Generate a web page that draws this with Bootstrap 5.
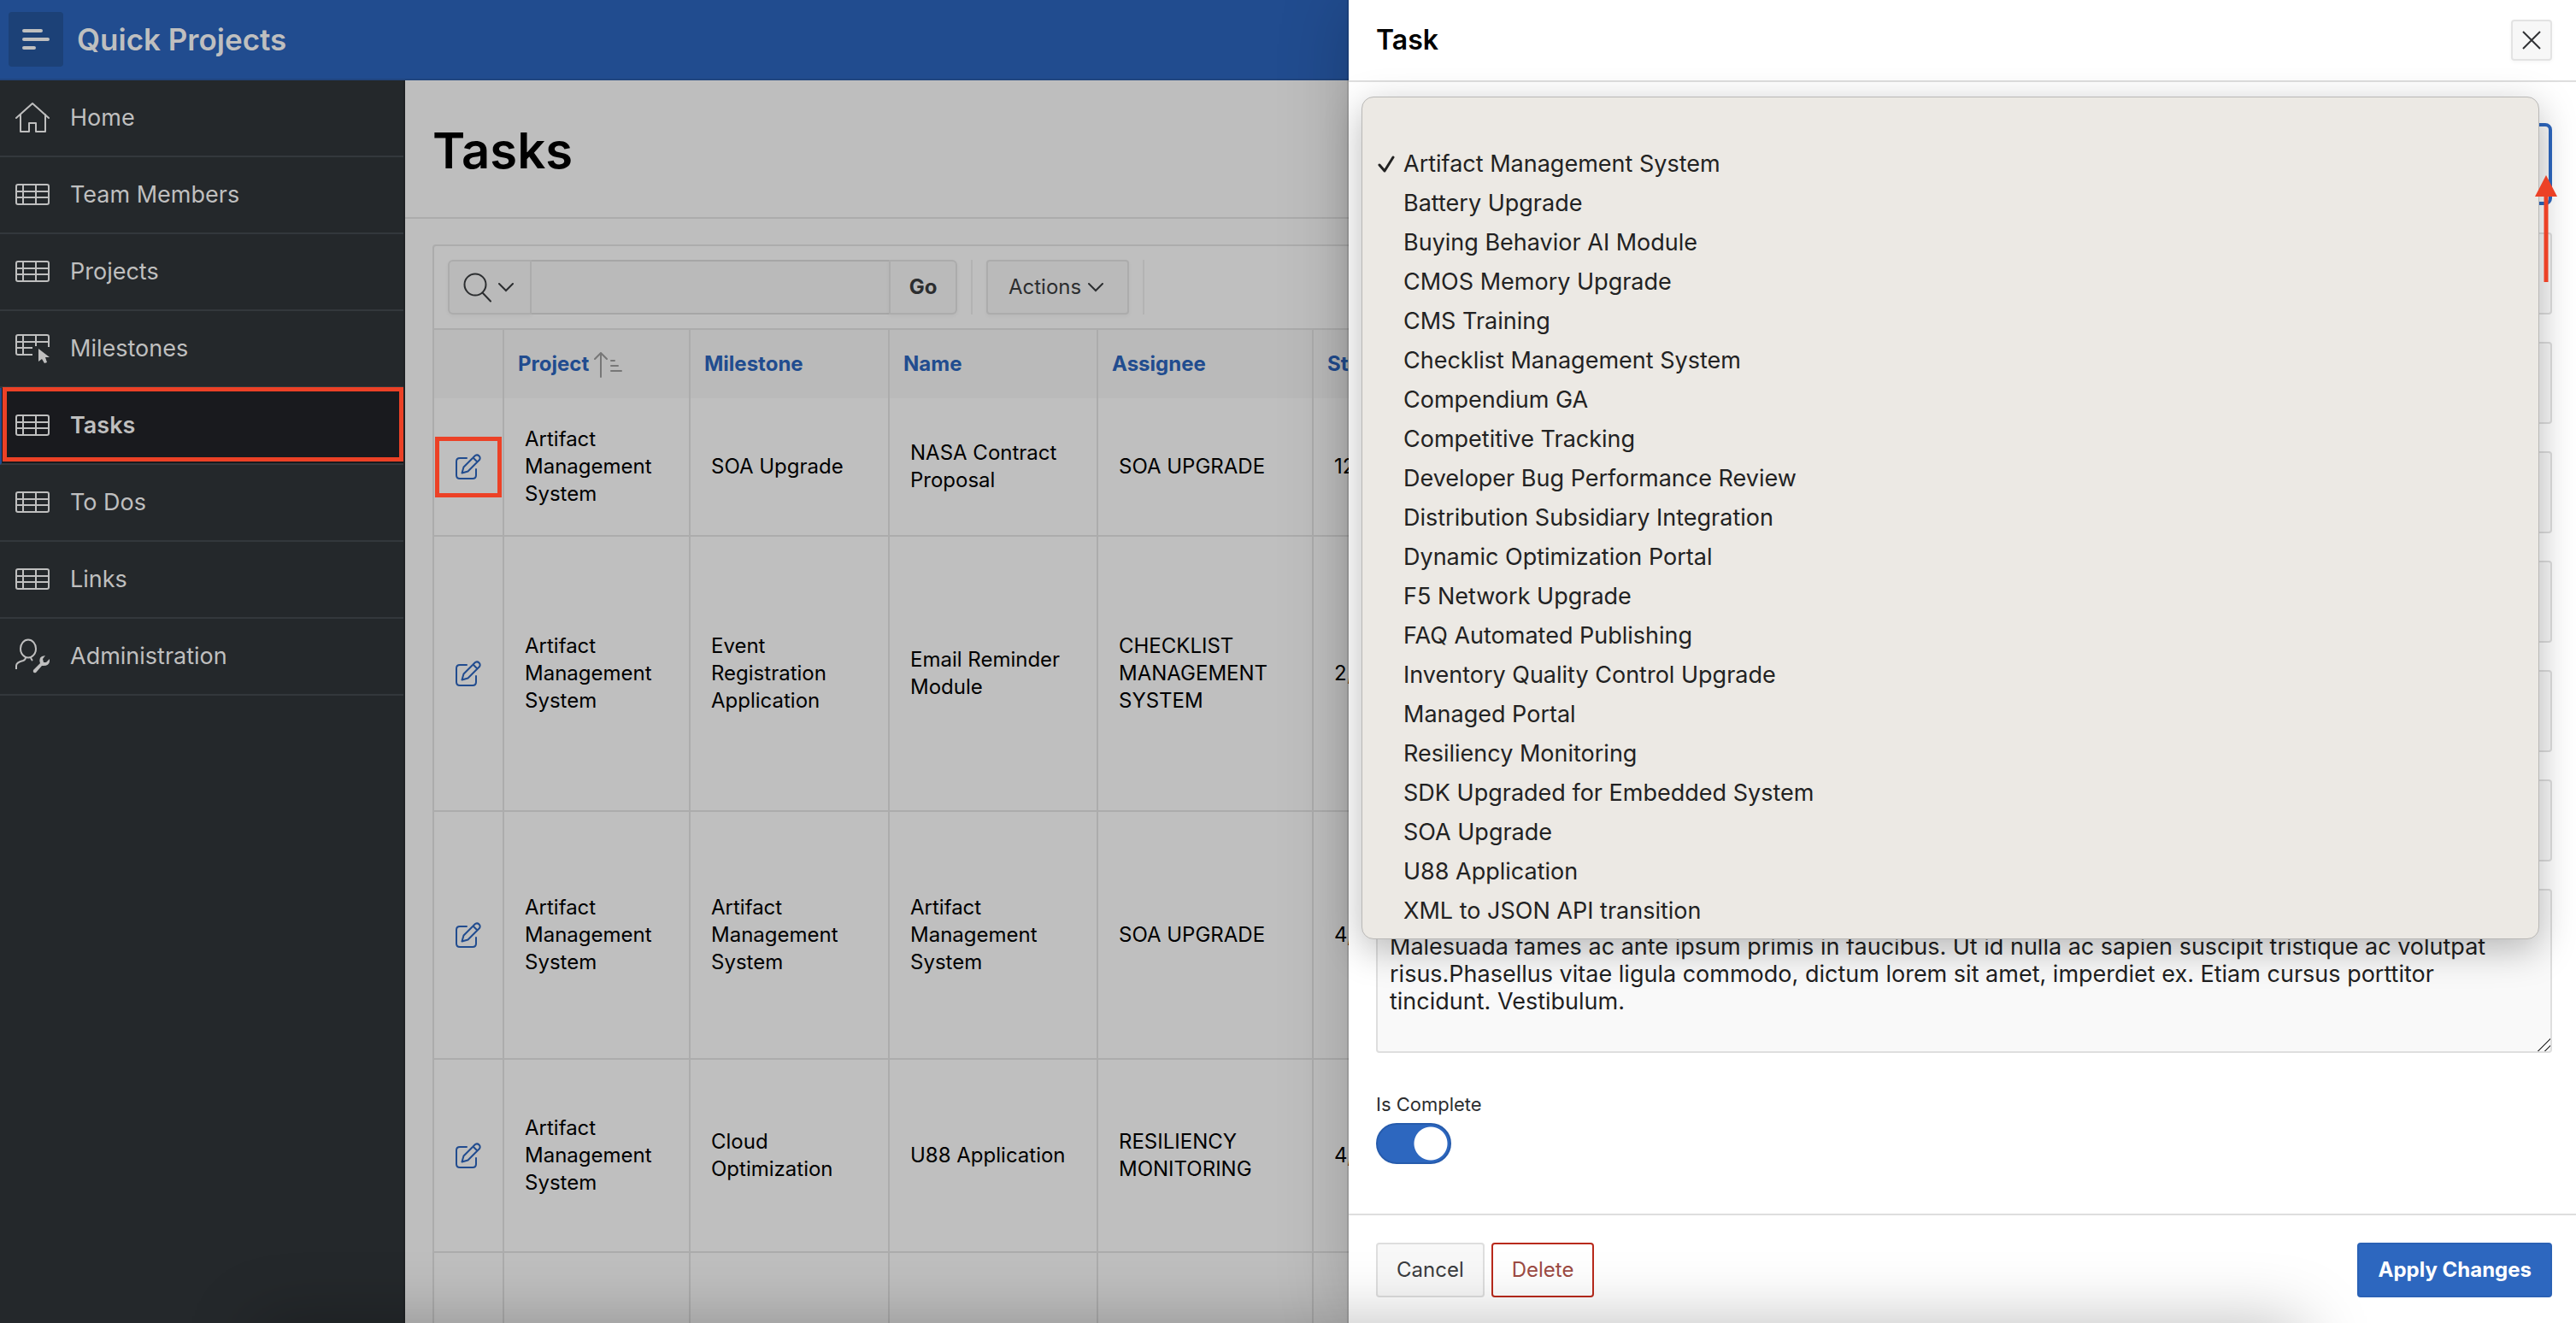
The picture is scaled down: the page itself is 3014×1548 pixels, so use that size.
<!DOCTYPE html>
<html lang="en">
<head>
<meta charset="utf-8">
<meta name="viewport" content="width=device-width, initial-scale=1">
<title>Quick Projects - Tasks</title>
<link href="https://cdn.jsdelivr.net/npm/bootstrap@5.3.0/dist/css/bootstrap.min.css" rel="stylesheet">
<style>
:root { --app-blue: #214c8f; --app-red: #ec4126; --app-line: #acacac; --app-accent: #2d67bf; }
body { font-family: Inter, "Liberation Sans", sans-serif; font-size: 24px; line-height: 32px; color: #000; background: #bebebe; }
button, input, select, textarea { font-family: inherit; }
.app-shell { height: 100vh; overflow: hidden; }
.app-shell::after { content: ""; position: absolute; z-index: 20; top: 100%; left: 300px; right: 320px; height: 100px; box-shadow: 0 0 80px rgba(0,0,0,.26); pointer-events: none; }
.app-header { height: 94px; padding: 0 10px; gap: 16px; background: var(--app-blue); border-bottom: 2px solid #20457f; }
.menu-toggle { width: 64px; height: 64px; background: #1c4177; border-radius: 4px; }
.app-name { font-size: 35px; line-height: 40px; font-weight: 600; color: #bfbfbf; }
.side-nav { width: 474px; background: #24282b; border-right: 2px solid #1f2225; }
.side-link { height: 90px; padding-left: 18px; gap: 24px; border-bottom: 2px solid #33383c; font-size: 27px; color: #bfbfbf; }
.side-link.active { background: #191a1e; border-left: 2px solid var(--app-blue); padding-left: 16px; font-weight: 600; position: relative; }
.side-link.active::after { content: ""; position: absolute; inset: -1px 0 2px 1px; border: 5px solid var(--app-red); }
.page-title { height: 162px; padding: 4px 32px 0; border-bottom: 2px solid #acacac; }
.page-title h1 { font-size: 58px; line-height: 72px; font-weight: 600; }
.report { margin: 30px 0 0 32px; border: 2px solid var(--app-line); border-radius: 4px 0 0 0; background: #bfbfbf; width: 1700px; }
.report-bar { height: 98px; padding: 16px; gap: 16px; border-bottom: 2px solid var(--app-line); }
.bar-btn { background: #bababa; border: 2px solid var(--app-line); color: #2c2e30; font-size: 24px; height: 64px; box-shadow: 0 2px 4px rgba(0,0,0,.04); }
.search-btn { width: 98px; }
.go-btn { width: 80px; }
.bar-input { width: 418px; height: 64px; background: #bababa; border: 2px solid #a6a6a6; border-left: 0; border-right: 0; }
.bar-rule { width: 2px; background: #b3b3b3; }
.grid { table-layout: fixed; width: 1696px; border-collapse: separate; border-spacing: 0; }
.grid th { height: 80px; padding: 0 16px; background: #bababa; border-right: 2px solid var(--app-line); font-weight: 700; vertical-align: middle; }
.grid th a { color: var(--app-blue); text-decoration: none; }
.grid td { padding: 0 24px; border-right: 2px solid var(--app-line); border-bottom: 2px solid var(--app-line); vertical-align: middle; }
.grid td:first-child { padding: 0; text-align: center; }
.col-edit { width: 82px; } .col-project { width: 218px; } .col-mile { width: 233px; } .col-name { width: 244px; } .col-who { width: 252px; }
.row-a td { height: 162px; } .row-b td { height: 322px; } .row-c td { height: 290px; } .row-d td { height: 226px; }
.edit-link { display: inline-flex; align-items: center; justify-content: center; vertical-align: middle; width: 78px; height: 71px; color: var(--app-blue); }
.edit-link.marked { border: 5px solid var(--app-red); }
.drawer { left: 1578px; background: #fff; box-shadow: 0 0 80px rgba(0,0,0,.2), -2px 0 0 rgba(0,0,0,.1); z-index: 10; }
.drawer-head { height: 96px; padding: 0 28px 0 32px; border-bottom: 2px solid #dedede; }
.drawer-head h2 { font-size: 32px; line-height: 40px; font-weight: 600; }
.close-btn { width: 48px; height: 48px; background: #f7f7f7; border: 2px solid #e3e3e3; border-radius: 4px; box-shadow: 0 2px 4px rgba(0,0,0,.04); }
.drawer-body { padding: 48px 28px 0 32px; gap: 32px; }
.field { appearance: none; height: 96px; flex: none; background-color: #f9f9f9; border: 2px solid #dedede; border-radius: 4px; font-size: 27px; }
.field.on { border: 4px solid var(--app-accent); border-radius: 8px; }
.field-notes { height: 192px; flex: none; background: #f9f9f9; border: 2px solid #dedede; border-radius: 4px; padding: 50px 14px 0; font-size: 27px; line-height: 32px; color: #1f1f1f; resize: vertical; overflow: hidden; }
.field-notes::-webkit-resizer { background: linear-gradient(135deg, transparent 49%, #555 49%, #555 56%, transparent 56%, transparent 76%, #555 76%, #555 83%, transparent 83%); }
.switch-group { margin-top: 14px; }
.switch-group label { font-size: 22px; line-height: 28px; color: #2c2e30; }
.switch-group .form-switch { padding: 0; min-height: 0; margin: 0; }
.switch-group .form-check-input { width: 88px; height: 48px; margin: 8px 0 0; background-color: var(--app-accent); border: 2px solid #265bac; background-size: 44px 44px; background-image: radial-gradient(circle at center, #fff 19px, rgba(255,255,255,0) 20px); background-position: right center; }
.drawer-foot { height: 128px; padding: 2px 28px 0 32px; border-top: 2px solid #dedede; gap: 8px; }
.foot-btn { height: 64px; border: 2px solid #dedede; border-radius: 4px; background: #f8f8f8; padding: 0 22px; font-size: 24px; color: #3a3c3e; }
.foot-btn.danger { background: transparent; border-color: #b92a1c; color: #9d4b43; }
.foot-btn.primary { background: var(--app-accent); border-color: #2a61b5; color: #fff; font-weight: 700; }
.choices { left: 15px; right: 43px; top: 113px; padding: 9px 0; background: #ece9e4; border: 1px solid #b9b8b6; border-radius: 14px; box-shadow: 0 12px 44px rgba(0,0,0,.27); font-size: 27px; color: #222; z-index: 3; }
.choices li { height: 46px; padding-left: 18px; }
.choices svg { width: 20px; margin-right: 10px; }
.arrow { right: 22px; top: 205px; z-index: 5; }
</style>
</head>
<body>
<svg class="d-none" xmlns="http://www.w3.org/2000/svg">
  <symbol id="i-table" viewBox="0 0 40 26"><g fill="none" stroke="currentColor" stroke-width="2"><rect x="1" y="1" width="38" height="23" rx="2"/><path d="M1 9h38M1 16h38M9 1v23M24 1v23"/></g></symbol>
  <symbol id="i-edit" viewBox="0 0 30 30"><g fill="none" stroke="currentColor" stroke-width="2" stroke-linejoin="round" stroke-linecap="round"><path d="M13 5H5q-4 0-4 4v16q0 4 4 4h15q4 0 4-4v-7"/><path d="M7.500 22.500l2-7L23 2q2.500-1.500 4.500.5T28 7L14.500 20.500zM20.500 4.500l5 5"/></g></symbol>
  <symbol id="i-down" viewBox="0 0 18 11"><path d="M1 1l8 8 8-8" fill="none" stroke="currentColor" stroke-width="2" stroke-linecap="round"/></symbol>
</svg>
<div class="app-shell d-flex flex-column position-relative">
  <header class="app-header d-flex align-items-center flex-shrink-0">
    <button class="menu-toggle btn border-0 p-0 d-flex align-items-center justify-content-center" type="button" aria-label="Menu"><svg width="32" height="26" viewBox="0 0 32 26"><path d="M2 3h20M2 13h28M2 23h12" stroke="#bfbfbf" stroke-width="4" stroke-linecap="round"/></svg></button>
    <span class="app-name">Quick Projects</span>
  </header>
  <div class="d-flex flex-grow-1 overflow-hidden">
    <nav class="side-nav flex-shrink-0">
      <a class="side-link d-flex align-items-center text-decoration-none" href="#"><svg width="40" height="40" viewBox="0 0 40 40" fill="none" stroke="currentColor" stroke-width="2"><path d="M1 20L20 3l19 17M6 16v20h10V26h8v10h11V16" stroke-linejoin="round" stroke-linecap="round"/></svg>Home</a>
      <a class="side-link d-flex align-items-center text-decoration-none" href="#"><svg width="40" height="26"><use href="#i-table"/></svg>Team Members</a>
      <a class="side-link d-flex align-items-center text-decoration-none" href="#"><svg width="40" height="26"><use href="#i-table"/></svg>Projects</a>
      <a class="side-link d-flex align-items-center text-decoration-none" href="#"><svg width="40" height="34" viewBox="0 0 40 34"><path d="M20 24H3q-2 0-2-2V3q0-2 2-2h34q2 0 2 2v12M1 9h38M1 16h19M9 1v23M24 1v13" fill="none" stroke="currentColor" stroke-width="2"/><path d="M27 17v15l4-3 3 5 3-1-2-6h5z" fill="currentColor"/></svg>Milestones</a>
      <a class="side-link active d-flex align-items-center text-decoration-none" href="#"><svg width="40" height="26"><use href="#i-table"/></svg>Tasks</a>
      <a class="side-link d-flex align-items-center text-decoration-none" href="#"><svg width="40" height="26"><use href="#i-table"/></svg>To Dos</a>
      <a class="side-link d-flex align-items-center text-decoration-none" href="#"><svg width="40" height="26"><use href="#i-table"/></svg>Links</a>
      <a class="side-link d-flex align-items-center text-decoration-none" href="#"><svg width="40" height="42" viewBox="0 0 40 42"><g fill="none" stroke="currentColor" stroke-width="2"><ellipse cx="15" cy="12" rx="9" ry="10.500"/><path d="M12 22q0 3-3 4-8 2-8 6v4M18 22q0 2 2 4"/></g><path d="M21 37l8-8q-2-6 2-8l4-1-3 4 1 4 3 0 4-4q1 9-9 8l-7 8q-4 1-3-3z" fill="currentColor"/></svg>Administration</a>
    </nav>
    <main class="flex-grow-1 overflow-hidden">
      <div class="page-title d-flex align-items-center"><h1 class="m-0">Tasks</h1></div>
      <section class="report">
        <div class="report-bar d-flex">
          <div class="d-flex">
            <button class="bar-btn search-btn btn rounded-0 rounded-start d-flex align-items-center p-0 ps-3" type="button" aria-label="Search columns"><svg width="33" height="35" viewBox="0 0 33 35" fill="none" stroke="currentColor" stroke-width="2"><circle cx="14" cy="14" r="12.500"/><path d="M22.500 23.500l9.500 10" stroke-linecap="round"/></svg><svg class="ms-2" width="18" height="11"><use href="#i-down"/></svg></button>
            <input class="bar-input" type="text" aria-label="Search">
            <button class="bar-btn go-btn btn rounded-0 rounded-end fw-bold p-0" type="button">Go</button>
          </div>
          <div class="bar-rule"></div>
          <button class="bar-btn btn rounded-1 ps-4 py-0 d-flex align-items-center gap-2" type="button">Actions <svg class="me-3" width="18" height="11"><use href="#i-down"/></svg></button>
          <div class="bar-rule"></div>
        </div>
        <table class="grid">
          <colgroup><col class="col-edit"><col class="col-project"><col class="col-mile"><col class="col-name"><col class="col-who"><col></colgroup>
          <thead><tr><th aria-label="Edit"></th><th><a href="#">Project</a> <svg width="33" height="30" viewBox="0 0 33 30" fill="none" stroke="#777" stroke-width="2" stroke-linecap="round"><path d="M8 29V1M1 8l7-7 7 7M20 10h4M20 16h8M20 22h12"/></svg></th><th><a href="#">Milestone</a></th><th><a href="#">Name</a></th><th><a href="#">Assignee</a></th><th><a href="#">Start</a></th></tr></thead>
          <tbody>
            <tr class="row-a"><td><a class="edit-link marked" href="#" aria-label="Edit"><svg width="30" height="30"><use href="#i-edit"/></svg></a></td><td>Artifact Management System</td><td>SOA Upgrade</td><td>NASA Contract Proposal</td><td>SOA UPGRADE</td><td>12</td></tr>
            <tr class="row-b"><td><a class="edit-link" href="#" aria-label="Edit"><svg width="30" height="30"><use href="#i-edit"/></svg></a></td><td>Artifact Management System</td><td>Event Registration Application</td><td>Email Reminder Module</td><td>CHECKLIST MANAGEMENT SYSTEM</td><td>2,</td></tr>
            <tr class="row-c"><td><a class="edit-link" href="#" aria-label="Edit"><svg width="30" height="30"><use href="#i-edit"/></svg></a></td><td>Artifact Management System</td><td>Artifact Management System</td><td>Artifact Management System</td><td>SOA UPGRADE</td><td>4,</td></tr>
            <tr class="row-d"><td><a class="edit-link" href="#" aria-label="Edit"><svg width="30" height="30"><use href="#i-edit"/></svg></a></td><td>Artifact Management System</td><td>Cloud Optimization</td><td>U88 Application</td><td>RESILIENCY MONITORING</td><td>4,</td></tr>
            <tr class="row-d"><td></td><td></td><td></td><td></td><td></td><td></td></tr>
          </tbody>
        </table>
      </section>
    </main>
  </div>

  <aside class="drawer position-absolute top-0 bottom-0 end-0 d-flex flex-column">
    <div class="drawer-head d-flex align-items-center justify-content-between flex-shrink-0">
      <h2 class="m-0">Task</h2>
      <button class="close-btn btn p-0 d-flex align-items-center justify-content-center" type="button" aria-label="Close"><svg width="22" height="22" viewBox="0 0 22 22"><path d="M1 1l20 20M21 1L1 21" stroke="#303234" stroke-width="2"/></svg></button>
    </div>
    <form class="drawer-body d-flex flex-column flex-grow-1">
      <select class="field on" aria-label="Project"><option></option></select>
      <input class="field" type="text" aria-label="Milestone">
      <input class="field" type="text" aria-label="Name">
      <input class="field" type="text" aria-label="Assignee">
      <input class="field" type="text" aria-label="Start Date">
      <input class="field" type="text" aria-label="End Date">
      <input class="field" type="text" aria-label="Cost">
      <textarea class="field-notes" aria-label="Description">Malesuada fames ac ante ipsum primis in faucibus. Ut id nulla ac sapien suscipit tristique ac volutpat risus.Phasellus vitae ligula commodo, dictum lorem sit amet, imperdiet ex. Etiam cursus porttitor tincidunt. Vestibulum.</textarea>
      <div class="switch-group">
        <label class="d-block" for="done">Is Complete</label>
        <div class="form-check form-switch d-flex"><input class="form-check-input" id="done" type="checkbox" role="switch" checked></div>
      </div>
    </form>
    <div class="drawer-foot d-flex align-items-center flex-shrink-0">
      <button class="foot-btn" type="button">Cancel</button>
      <button class="foot-btn danger" type="button">Delete</button>
      <button class="foot-btn primary ms-auto" type="button">Apply Changes</button>
    </div>
    <ul class="choices list-unstyled position-absolute m-0">
      <li></li>
      <li class="d-flex align-items-center"><svg height="20" viewBox="0 0 20 20"><path d="M2 11l6 7L18 2" fill="none" stroke="#222" stroke-width="3" stroke-linecap="round" stroke-linejoin="round"/></svg>Artifact Management System</li>
      <li class="d-flex align-items-center ps-5">Battery Upgrade</li>
      <li class="d-flex align-items-center ps-5">Buying Behavior AI Module</li>
      <li class="d-flex align-items-center ps-5">CMOS Memory Upgrade</li>
      <li class="d-flex align-items-center ps-5">CMS Training</li>
      <li class="d-flex align-items-center ps-5">Checklist Management System</li>
      <li class="d-flex align-items-center ps-5">Compendium GA</li>
      <li class="d-flex align-items-center ps-5">Competitive Tracking</li>
      <li class="d-flex align-items-center ps-5">Developer Bug Performance Review</li>
      <li class="d-flex align-items-center ps-5">Distribution Subsidiary Integration</li>
      <li class="d-flex align-items-center ps-5">Dynamic Optimization Portal</li>
      <li class="d-flex align-items-center ps-5">F5 Network Upgrade</li>
      <li class="d-flex align-items-center ps-5">FAQ Automated Publishing</li>
      <li class="d-flex align-items-center ps-5">Inventory Quality Control Upgrade</li>
      <li class="d-flex align-items-center ps-5">Managed Portal</li>
      <li class="d-flex align-items-center ps-5">Resiliency Monitoring</li>
      <li class="d-flex align-items-center ps-5">SDK Upgraded for Embedded System</li>
      <li class="d-flex align-items-center ps-5">SOA Upgrade</li>
      <li class="d-flex align-items-center ps-5">U88 Application</li>
      <li class="d-flex align-items-center ps-5">XML to JSON API transition</li>
    </ul>
    <svg class="arrow position-absolute" width="26" height="125" viewBox="0 0 26 125" fill="#ec4126"><path d="M13 0l13 25H15.500v100h-5V25H0z"/></svg>
  </aside>
</div>
<script src="https://cdn.jsdelivr.net/npm/bootstrap@5.3.0/dist/js/bootstrap.bundle.min.js"></script>
</body>
</html>
